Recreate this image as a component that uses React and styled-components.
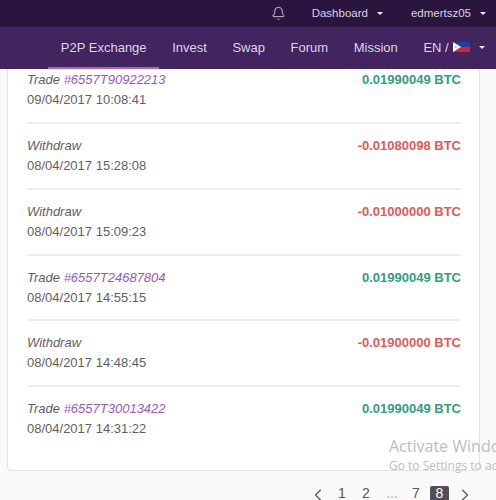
import React from 'react'
import styled, { createGlobalStyle } from 'styled-components'
import { Bell, ChevronLeft, ChevronRight } from 'lucide-react'

const Global = createGlobalStyle`
  html, body {
    margin: 0;
    padding: 0;
    background: #fafafa;
    font-family: "Liberation Sans", Arial, sans-serif;
    overflow: hidden;
  }
`
const Page = styled.div`
  position: relative;
  width: 496px;
  height: 500px;
  overflow: hidden;
`
const TopBar = styled.div`
  height: 27px;
  background: #2a153f;
  display: flex;
  align-items: center;
  justify-content: flex-end;
  padding: 0 10px 1px 0;
  box-sizing: border-box;
  color: #d9d3e0;
  font-size: 11.5px;
  white-space: nowrap;
`
const TopItem = styled.div`
  display: flex;
  align-items: center;
  margin-left: ${(p) => p.$gap}px;
`
const Caret = styled.span`
  display: inline-block;
  margin-left: ${(p) => p.$gap || 9}px;
  border-left: 3px solid transparent;
  border-right: 3px solid transparent;
  border-top: 3.5px solid #f0edf3;
`
const Nav = styled.nav`
  height: 42px;
  background: #42245f;
  display: flex;
  padding-left: 48px;
  box-sizing: border-box;
  color: #dcd6e3;
  font-size: 13px;
  white-space: nowrap;
`
const NavItem = styled.div`
  display: flex;
  align-items: center;
  padding: 0 12.8px;
  height: 100%;
  box-sizing: border-box;
  border-bottom: 2px solid ${(p) => (p.$active ? '#a566c4' : 'transparent')};
`
const Flag = styled.svg`
  width: 17px;
  height: 10px;
  margin-left: 4px;
`
const Card = styled.section`
  width: 473px;
  height: 402px;
  margin-left: 7px;
  box-sizing: border-box;
  background: #fff;
  border: 1px solid #e4e4e4;
  border-top: 0;
  border-radius: 0 0 4px 4px;
  padding: 0 18px 0 19px;
`
const Row = styled.div`
  height: ${(p) => (p.$first ? 55 : 65.75)}px;
  box-sizing: border-box;
  padding-top: ${(p) => (p.$first ? 1 : 12)}px;
  border-bottom: ${(p) => (p.$last ? 0 : '2px solid #eeeeee')};
  display: flex;
  justify-content: space-between;
`
const Kind = styled.div`
  font-size: 13px;
  line-height: 20px;
  font-style: italic;
  color: #5f5f5f;
`
const Ref = styled.span`
  color: #9b59b6;
`
const When = styled.div`
  font-size: 13px;
  line-height: 20px;
  color: #5f5f5f;
`
const Amount = styled.div`
  font-size: 13px;
  line-height: 20px;
  font-weight: bold;
  color: ${(p) => (p.$neg ? '#e05a5a' : '#2f9e82')};
`
const Pager = styled.div`
  display: flex;
  align-items: center;
  justify-content: flex-end;
  height: 14px;
  margin-top: 15px;
  padding-right: 21px;
  color: #555;
  font-size: 14px;
`
const PageNum = styled.span`
  width: ${(p) => p.$w || 24}px;
  height: 14px;
  line-height: 14px;
  text-align: center;
  border-radius: 2px 2px 0 0;
  margin: ${(p) => (p.$on ? '0 6px 0 4px' : 0)};
  background: ${(p) => (p.$on ? '#544d5a' : 'transparent')};
  color: ${(p) => (p.$on ? '#fff' : p.$dim ? '#aaa' : '#555')};
`
const PrevIcon = styled(ChevronLeft)`
  margin: -1px 2px -5px 0;
`
const NextIcon = styled(ChevronRight)`
  margin: -1px 0 -5px 0;
`
const Watermark = styled.div`
  position: absolute;
  left: 389px;
  top: 436px;
  white-space: nowrap;
  color: #bdbdbd;
  font-family: "Open Sans", sans-serif;
`
const WmTitle = styled.div`
  font-size: 16px;
  line-height: 21px;
`
const WmSub = styled.div`
  font-size: 12px;
  line-height: 17px;
`

const rows = [
  { kind: 'Trade', ref: '#6557T90922213', when: '09/04/2017 10:08:41', amount: '0.01990049 BTC' },
  { kind: 'Withdraw', when: '08/04/2017 15:28:08', amount: '-0.01080098 BTC', neg: true },
  { kind: 'Withdraw', when: '08/04/2017 15:09:23', amount: '-0.01000000 BTC', neg: true },
  { kind: 'Trade', ref: '#6557T24687804', when: '08/04/2017 14:55:15', amount: '0.01990049 BTC' },
  { kind: 'Withdraw', when: '08/04/2017 14:48:45', amount: '-0.01900000 BTC', neg: true },
  { kind: 'Trade', ref: '#6557T30013422', when: '08/04/2017 14:31:22', amount: '0.01990049 BTC' },
]

export default function App() {
  return (
    <Page>
      <Global />
      <TopBar>
        <Bell size={15} strokeWidth={1.4} />
        <TopItem $gap={26}>Dashboard<Caret /></TopItem>
        <TopItem $gap={28}>edmertsz05<Caret /></TopItem>
      </TopBar>
      <Nav>
        <NavItem $active>P2P Exchange</NavItem>
        <NavItem>Invest</NavItem>
        <NavItem>Swap</NavItem>
        <NavItem>Forum</NavItem>
        <NavItem>Mission</NavItem>
        <NavItem>
          EN /
          <Flag viewBox="0 0 17 10">
            <rect width="17" height="5" fill="#1f3fa8" />
            <rect y="5" width="17" height="5" fill="#d8222f" />
            <path d="M0 0L8 5L0 10Z" fill="#fff" />
            <circle cx="2.6" cy="5" r="1.1" fill="#f2c230" />
          </Flag>
          <Caret />
        </NavItem>
      </Nav>
      <Card>
        {rows.map((r, i) => (
          <Row key={r.when} $first={i === 0} $last={i === rows.length - 1}>
            <div>
              <Kind>
                {r.kind}
                {r.ref && <Ref> {r.ref}</Ref>}
              </Kind>
              <When>{r.when}</When>
            </div>
            <Amount $neg={r.neg}>{r.amount}</Amount>
          </Row>
        ))}
      </Card>
      <Pager>
        <PrevIcon size={20} strokeWidth={1.4} />
        <PageNum>1</PageNum>
        <PageNum>2</PageNum>
        <PageNum $w={28} $dim>...</PageNum>
        <PageNum $w={20}>7</PageNum>
        <PageNum $w={19} $on>8</PageNum>
        <NextIcon size={20} strokeWidth={1.4} />
      </Pager>
      <Watermark>
        <WmTitle>Activate Windows</WmTitle>
        <WmSub>Go to Settings to activate Windows.</WmSub>
      </Watermark>
    </Page>
  )
}
